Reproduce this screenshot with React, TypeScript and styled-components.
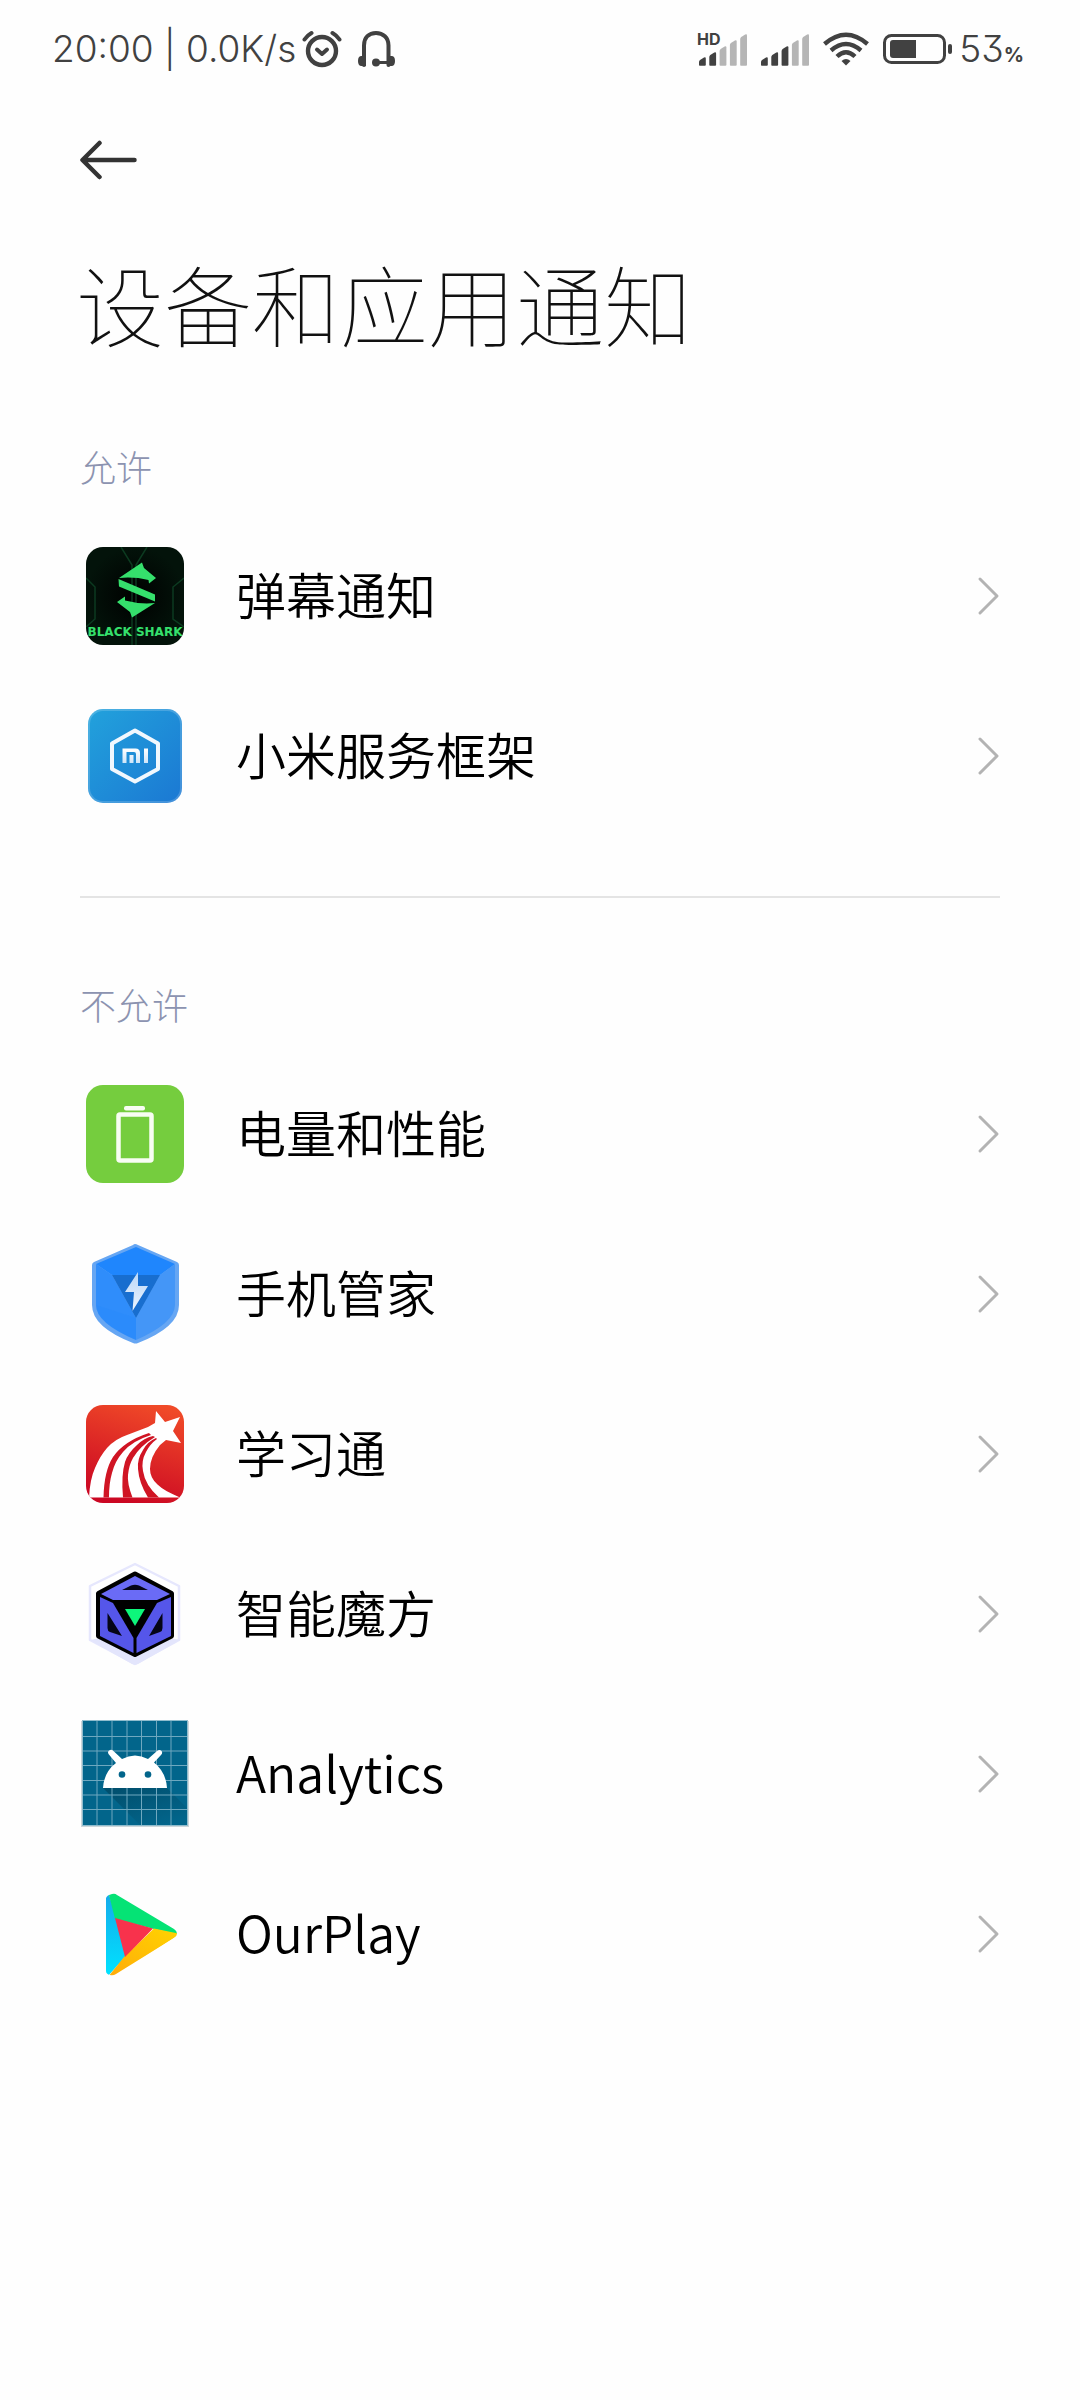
import React from 'react';
import styled, { createGlobalStyle } from 'styled-components';

const GlobalStyle = createGlobalStyle`
  *, *::before, *::after { box-sizing: border-box; }
  html, body { margin: 0; padding: 0; background: #fefefe; }
  body { font-family: "Noto Sans CJK SC", "Noto Sans", sans-serif; color: #000; }
`;

const Page = styled.div`
  min-height: 100vh;
  background: #fefefe;
`;

const StatusBar = styled.header`
  display: flex;
  align-items: center;
  justify-content: space-between;
  height: 98px;
  padding: 0 56px 0 52px;
  color: #414141;
  font-family: Inter, sans-serif;
  font-weight: 300;
  font-size: 37px;
  line-height: 48px;
  white-space: nowrap;
`;

const StatusGroup = styled.div<{ $gap: number }>`
  display: flex;
  align-items: center;
  gap: ${({ $gap }) => $gap}px;
  svg { display: block; flex: none; }
`;

const StatusIcons = styled.div`
  display: flex;
  gap: 14px;
`;

const Level = styled.span`
  font-feature-settings: "cv09";
`;

const Percent = styled.small`
  font-size: 20px;
  line-height: 20px;
  font-weight: 700;
`;

const NavBar = styled.nav`
  display: flex;
  align-items: center;
  height: 124px;
  padding: 0 80px;
`;

const BackButton = styled.button`
  display: block;
  padding: 0;
  border: 0;
  background: none;
  cursor: pointer;
  svg { display: block; }
`;

const Title = styled.h1`
  margin: 0;
  padding: 14px 76px 0;
  color: #111;
  font-size: 88px;
  line-height: 132px;
  font-weight: 100;
`;

const Divider = styled.hr`
  margin: 60px 80px 8px;
  border: 0;
  height: 2px;
  background: #e4e4e4;
`;

const SectionLabel = styled.h2`
  margin: 0;
  padding: 74px 80px 26px;
  color: #8c93b0;
  font-size: 36px;
  line-height: 48px;
  font-weight: 300;
`;

const List = styled.ul`
  margin: 0;
  padding: 0;
  list-style: none;
`;

const Row = styled.a`
  display: flex;
  align-items: center;
  height: 160px;
  padding: 0 80px;
  color: #000;
  text-decoration: none;
`;

const IconSlot = styled.span`
  display: block;
  flex: none;
  width: 110px;
  height: 110px;
  margin-right: 46px;
  svg { display: block; }
`;

const RowLabel = styled.span`
  flex: 1;
  padding-bottom: 6px;
  font-size: 50px;
  line-height: 72px;
  font-weight: 350;
`;

const HdMark = styled.text`
  font-family: Inter, sans-serif;
  font-weight: 700;
`;

const SharkMark = styled.text`
  font-family: "DejaVu Sans", sans-serif;
  font-weight: 700;
`;

const Alarm = () => (
  <svg width="40" height="38" viewBox="0 0 40 38" fill="none" stroke="#414141" strokeLinecap="round" strokeLinejoin="round">
    <circle cx="20" cy="21" r="14" strokeWidth="4.4" />
    <path d="M15 19.500l5 4.500 5-4.500" strokeWidth="4" />
    <path d="M2.500 9.500Q5 5.500 9.500 3M37.500 9.500Q35 5.500 30.500 3" strokeWidth="4" />
  </svg>
);

const Headset = () => (
  <svg width="40" height="38" viewBox="0 0 40 38" fill="none" stroke="#414141">
    <path d="M8 35V15.500C8 7.500 13 3 20 3s12.500 4.500 12.500 12.500V35" strokeWidth="4" strokeLinecap="round" />
    <path d="M20 32.500h12" strokeWidth="3" />
    <circle cx="20" cy="32.500" r="4" fill="#414141" stroke="none" />
    <path d="M10 26H5.500Q2 26 2 31t3.500 5H10zM31 26h4.500Q39 26 39 31t-3.500 5H31z" fill="#414141" stroke="none" />
  </svg>
);

const Signal = ({ on, hd }: { on: number; hd?: boolean }) => (
  <svg width={hd ? 50 : 48} height="34" viewBox={hd ? '0 0 50 34' : '2 0 48 34'} overflow="visible">
    {[8, 13, 19, 25, 31].map((h, i) => (
      <path
        key={h}
        d={`M${2 + i * 10.300} 33v${-h + 5}q0-1 1-2l4-2.500q1.800-.8 1.800 1V33q0 .8-1 .8h-5q-.8 0-.8-.8z`}
        fill={i < on ? '#414141' : '#b5b5b5'}
      />
    ))}
    {hd && <HdMark x="0" y="13" fontSize="16" fill="#414141">HD</HdMark>}
  </svg>
);

const Wifi = () => (
  <svg width="46" height="34" viewBox="0 0 46 34" fill="none" stroke="#414141" strokeWidth="4.400">
    <path d="M1.500 12Q23-6.500 44.500 12" />
    <path d="M8 18.500Q23 5.500 38 18.500" />
    <path d="M14 24.500Q23 16 32 24.500" />
    <path d="M18.500 29Q23 25 27.500 29L23 33.500z" fill="#414141" stroke="none" />
  </svg>
);

const StatusBattery = () => (
  <svg width="70" height="32" viewBox="0 0 70 32">
    <rect x="1.500" y="2.500" width="60" height="27" rx="7" fill="none" stroke="#414141" strokeWidth="3" />
    <path d="M10 7H33V25H10Q7 25 7 22V10Q7 7 10 7z" fill="#414141" />
    <rect x="65" y="11" width="4" height="10" rx="2" fill="#414141" />
  </svg>
);

const BackArrow = () => (
  <svg width="58" height="40" viewBox="0 0 58 40" fill="none" stroke="#333" strokeWidth="4.500" strokeLinecap="round" strokeLinejoin="round">
    <path d="M54.500 20H3M19.500 3L2.500 20l17 17" />
  </svg>
);

const Chevron = () => (
  <svg width="24" height="40" viewBox="0 0 24 40" fill="none" stroke="#b3b3b3" strokeWidth="3" strokeLinecap="round" strokeLinejoin="round">
    <path d="M4 3l17 17L4 37" />
  </svg>
);

const SharkIcon = () => (
  <svg width="110" height="110" viewBox="0 0 110 110">
    <defs>
      <clipPath id="sharkClip"><rect x="6" y="6" width="98" height="98" rx="17" /></clipPath>
      <radialGradient id="sharkBg"><stop offset="0" stopColor="#000" /><stop offset="1" stopColor="#03130a" /></radialGradient>
    </defs>
    <g clipPath="url(#sharkClip)">
      <rect x="6" y="6" width="98" height="98" fill="url(#sharkBg)" />
      <g fill="none" stroke="#0c3a20" strokeWidth="1.500">
        <path d="M41 6l11 18v80M67 6L56 24v80M6 37l9 9v32l-9 8M104 37l-11 9v32l11 8" />
      </g>
      <g fill="#35e06c">
        <path d="M39 37L62 21.500 64 27l12 10-7 5.500-.5-3.500Q54 35.500 39 37z" />
        <path d="M38.500 38L75 53.500V60.500L39 45.500z" />
        <path d="M75 62L52 76.500 50 71 37 61l8-5.500v4Q60 63.500 75 62z" />
      </g>
      <SharkMark x="55" y="95" fontSize="12" textAnchor="middle" fill="#35e06c">BLACK SHARK</SharkMark>
    </g>
  </svg>
);

const MiIcon = () => (
  <svg width="110" height="110" viewBox="0 0 110 110">
    <defs>
      <linearGradient id="miBg" x1="0" y1="0" x2="1" y2="1"><stop offset="0" stopColor="#22a2dc" /><stop offset="1" stopColor="#1b78d3" /></linearGradient>
      <linearGradient id="miFg" x1="0" y1="0" x2="0" y2="1"><stop offset="0" stopColor="#fff" /><stop offset="1" stopColor="#cfe5f8" /></linearGradient>
    </defs>
    <rect x="8" y="8" width="94" height="94" rx="15" fill="url(#miBg)" />
    <rect x="9" y="9" width="92" height="92" rx="14" fill="none" stroke="#fff" strokeOpacity=".18" strokeWidth="2" />
    <path d="M55 29.500L78 42.500V68L55 80.500 32 68V42.500z" fill="none" stroke="#f1f8fe" strokeWidth="4" strokeLinejoin="round" />
    <path d="M42.500 47.500h13Q60 47.500 60 52v10h-4V53q0-2-2-2h-7.500v11h-4zM49.500 54h4v8h-4zM64 47.500h4V62h-4z" fill="url(#miFg)" />
  </svg>
);

const PowerIcon = () => (
  <svg width="110" height="110" viewBox="0 0 110 110">
    <rect x="6" y="6" width="98" height="98" rx="17" fill="#75cd3e" />
    <rect x="38.500" y="35.500" width="33" height="46" rx="1.500" fill="none" stroke="#f8fdf3" strokeWidth="4.500" />
    <rect x="44" y="27" width="21" height="4.500" rx="2" fill="#f8fdf3" />
  </svg>
);

const ShieldIcon = () => (
  <svg width="110" height="110" viewBox="0 0 110 110">
    <defs>
      <clipPath id="shieldClip"><path d="M55 5Q56.500 5 58 6L97 23Q99 24 99 26V66Q99 88 58 104Q55.500 105 53 104Q12 88 12 66V26Q12 24 14 23L53 6Q54 5 55 5z" /></clipPath>
      <linearGradient id="bolt" x1="0" y1="0" x2="0" y2="1"><stop offset="0" stopColor="#bcd8f8" /><stop offset="1" stopColor="#eaf3fe" /></linearGradient>
    </defs>
    <g clipPath="url(#shieldClip)">
      <path d="M12 5h87v100H12z" fill="#66a6f3" />
      <path d="M16 25L56 8l39 17-15 11H32z" fill="#1f86fd" />
      <path d="M16 25L32 36 56 79V101Q16 84 16 66z" fill="#2f8dfb" />
      <path d="M95 25L80 36 56 79V101Q95 84 95 66z" fill="#4496f7" />
      <path d="M16 66L56 79V101Q16 84 16 66z" fill="#2487fd" fillOpacity=".3" />
      <path d="M32 36H80L56 79z" fill="#186ecf" />
    </g>
    <path d="M58 33L45 53h9l-1.500 19L68 47H58z" fill="url(#bolt)" />
  </svg>
);

const StudyIcon = () => (
  <svg width="110" height="110" viewBox="0 0 110 110">
    <defs>
      <clipPath id="studyClip"><rect x="6" y="6" width="98" height="98" rx="17" /></clipPath>
      <linearGradient id="studyBg" x1=".7" y1="0" x2=".4" y2="1"><stop offset="0" stopColor="#f04a28" /><stop offset="1" stopColor="#cb0723" /></linearGradient>
    </defs>
    <g clipPath="url(#studyClip)">
      <rect x="6" y="6" width="98" height="98" fill="url(#studyBg)" />
      <path d="M76 12L85 23 100 18 93 32 101 44 86 41 80 46Q70 58 70 70C70 82 80 90 100 98.500H9Q10 80 15 69 20 57 27 49 35 40 47 36L68 28 75 24z" fill="#fff" />
      <g fill="#d01524">
        <path d="M69 34Q44 42 33 58 24 72 23.500 98.500H29Q29 84 32 74 35 62 43 53 52 42 71 36z" />
        <path d="M73 37Q64 39 57 46 48 54 45 63 41 76 43 98.500H52.500Q47 84 48 76 49 66 53 59 60 47 75 38z" />
        <path d="M76 39Q67 43 63 51 57 60 58 70 59 84 68 98.500H79Q65 86 63 72 61 62 66 53 70 45 77 40z" />
      </g>
    </g>
  </svg>
);

const CubeIcon = () => (
  <svg width="110" height="110" viewBox="0 0 110 110">
    <path d="M55 5L99 27V81L55 105 10 81V27z" fill="#fff" stroke="#e6e7fd" strokeWidth="2.500" strokeLinejoin="round" />
    <path d="M10 81L20 79 55 97 91 79 100 81 58 105Q55 106.500 52 105z" fill="#e3e5fc" />
    <path d="M55 15L91.500 34.500V77L55 95.500 18.500 77V34.500z" fill="#000" stroke="#000" strokeWidth="5" strokeLinejoin="round" />
    <path d="M21 35L55 17 90 35 77 41H33z" fill="#6a6bf6" />
    <path d="M20 38L33 44 53.500 79V94L20 77z" fill="#5556ea" />
    <path d="M91 38L77 44 56.500 79V94L91 77z" fill="#5556ea" />
    <path d="M42 31L51 26.500Q55 25 59 26.500L68 31zM27.500 54L42 77 30 73Q27.500 72 27.500 69zM82.500 54L69 77 80 73Q82.500 72 82.500 69z" fill="#050516" />
    <path d="M45 50H65L55 67z" fill="#0df67b" />
  </svg>
);

const AndroidIcon = () => (
  <svg width="110" height="110" viewBox="0 1 110 110">
    <defs>
      <linearGradient id="droidShade" x1="0" y1="0" x2=".7" y2="1"><stop offset="0" stopColor="#00364c" stopOpacity=".5" /><stop offset="1" stopColor="#00364c" stopOpacity="0" /></linearGradient>
    </defs>
    <rect x="1" y="3" width="108" height="106" fill="#cdd6da" />
    <rect x="2" y="2" width="106" height="106" fill="#02658b" />
    <path d="M23 70H87L108 91V108H61z" fill="url(#droidShade)" />
    <path d="M2 18.500H108M2 33H108M2 47.500H108M2 62.500H108M2 77H108M2 91.500H108M17 2V108M32 2V108M47 2V108M61.500 2V108M76.500 2V108M91 2V108" stroke="#6fa8bf" strokeWidth="1" />
    <rect x="2.500" y="2.500" width="105" height="105" fill="none" stroke="#8fbccd" strokeWidth="1" />
    <path d="M23 70Q24 54 36 45L28.500 36Q27 33 30 32 32 31 34 33.500L42 41Q55 34 68 41L77 33Q79.500 31 81.500 33 83 35 81 37L74 44.500Q86 54 87 70z" fill="#fff" />
    <circle cx="42" cy="56.500" r="3.300" fill="#02658b" />
    <circle cx="68" cy="56.500" r="3.300" fill="#02658b" />
  </svg>
);

const PlayIcon = () => (
  <svg width="110" height="110" viewBox="0 0 110 110">
    <defs>
      <clipPath id="playClip"><path d="M32 15Q35 14 37 16L94 50Q97 52 97 54.500T94 59L36 95Q33 97 30 96 26 95 26 92V19Q27 16 32 15z" /></clipPath>
      <linearGradient id="playBlue" x1="0" y1="0" x2="0" y2="1"><stop offset="0" stopColor="#16a8ea" /><stop offset="1" stopColor="#00e3ff" /></linearGradient>
      <linearGradient id="playYellow" x1="1" y1="0" x2="0" y2="1"><stop offset="0" stopColor="#ffd400" /><stop offset="1" stopColor="#ffab0a" /></linearGradient>
    </defs>
    <g clipPath="url(#playClip)">
      <path d="M24 12H28L36 38 46 77 28 97H24z" fill="url(#playBlue)" />
      <path d="M28 12H34L100 48V56L74 50 35 40z" fill="#05e375" />
      <path d="M100 55L74 49.500 44 78 28 98H34z" fill="url(#playYellow)" />
      <path d="M35 39L73 49.500 45 78z" fill="#f8324c" />
    </g>
  </svg>
);

type AppEntry = { name: string; Icon: () => React.ReactElement };

const sections: { label: string; apps: AppEntry[] }[] = [
  {
    label: '允许',
    apps: [
      { name: '弹幕通知', Icon: SharkIcon },
      { name: '小米服务框架', Icon: MiIcon },
    ],
  },
  {
    label: '不允许',
    apps: [
      { name: '电量和性能', Icon: PowerIcon },
      { name: '手机管家', Icon: ShieldIcon },
      { name: '学习通', Icon: StudyIcon },
      { name: '智能魔方', Icon: CubeIcon },
      { name: 'Analytics', Icon: AndroidIcon },
      { name: 'OurPlay', Icon: PlayIcon },
    ],
  },
];

export default function App() {
  return (
    <Page>
      <GlobalStyle />
      <StatusBar>
        <StatusGroup $gap={6}>
          <span>20:00 | 0.0K/s</span>
          <StatusIcons><Alarm /><Headset /></StatusIcons>
        </StatusGroup>
        <StatusGroup $gap={14}>
          <Signal on={2} hd />
          <Signal on={3} />
          <Wifi />
          <StatusGroup $gap={6}>
            <StatusBattery />
            <Level>53<Percent>%</Percent></Level>
          </StatusGroup>
        </StatusGroup>
      </StatusBar>
      <NavBar>
        <BackButton type="button" aria-label="返回"><BackArrow /></BackButton>
      </NavBar>
      <main>
        <Title>设备和应用通知</Title>
        {sections.map(({ label, apps }, index) => (
          <section key={label}>
            {index > 0 && <Divider />}
            <SectionLabel>{label}</SectionLabel>
            <List>
              {apps.map(({ name, Icon }) => (
                <li key={name}>
                  <Row href="#">
                    <IconSlot><Icon /></IconSlot>
                    <RowLabel>{name}</RowLabel>
                    <Chevron />
                  </Row>
                </li>
              ))}
            </List>
          </section>
        ))}
      </main>
    </Page>
  );
}
